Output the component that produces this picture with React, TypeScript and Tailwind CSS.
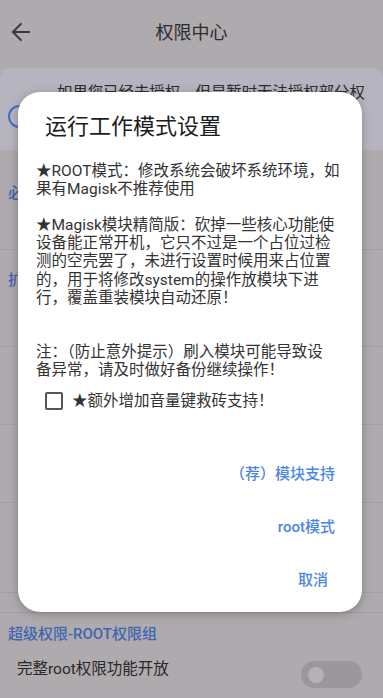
import React from "react";
import { ArrowLeft } from "lucide-react";

/* ---------- background page (dimmed by the dialog scrim) ---------- */

function Row({ children, h }: { children?: React.ReactNode; h: string }) {
  return (
    <div className={`${h} border-b border-[#a29ea3] px-2 flex items-center`}>
      {children}
    </div>
  );
}

function Toggle() {
  return (
    <div className="flex h-[27px] w-[61px] items-center rounded-full bg-[#9b989c] pl-[7px]">
      <div className="h-[16px] w-[16px] rounded-full bg-[#b5b2b6]" />
    </div>
  );
}

/* ---------- dialog ---------- */

function DialogButton({
  children,
  extra = "",
}: {
  children: React.ReactNode;
  extra?: string;
}) {
  return (
    <button
      className={`flex h-[53px] items-center text-[15px] font-medium text-[#4a86e2] ${extra}`}
    >
      {children}
    </button>
  );
}

export default function App() {
  return (
    <div className="relative h-[698px] w-full overflow-hidden bg-[#aeaaae] font-['Roboto','Noto_Sans_CJK_SC',sans-serif]">
      {/* header */}
      <div className="flex h-[64px] items-center">
        <div className="flex w-[48px] pl-[7px]">
          <ArrowLeft size={28} strokeWidth={1.7} className="text-[#3a383c]" />
        </div>
        <div className="flex-1 text-center text-[18px] text-[#2e2c30]">
          权限中心
        </div>
        <div className="w-[48px]" />
      </div>

      {/* info card */}
      <div className="mt-[4px] flex h-[82px] rounded-t-[10px] bg-[#b6b4be]">
        <div className="flex w-[57px] items-center pl-[8px] pt-[14px]">
          <div className="h-[23px] w-[23px] rounded-full border-[2.5px] border-[#3f6fcf]" />
        </div>
        <div className="whitespace-nowrap pt-[10px] text-[15.4px] leading-[30px] text-[#2e2c30]">
          如果您已经去授权，但是暂时无法授权部分权
          <br />
          限，请前往系统设置中手动开启相关应用权
        </div>
      </div>

      {/* list behind the dialog */}
      <Row h="h-[100px]">
        <span className="-mt-[12px] text-[15px] font-medium text-[#4066b0]">
          必要权限
        </span>
      </Row>
      <Row h="h-[97px]">
        <span className="-mt-[36px] text-[15px] font-medium text-[#4066b0]">
          扩展权限
        </span>
      </Row>
      <Row h="h-[78px]" />
      <Row h="h-[78px]" />
      <Row h="h-[90px]" />
      <Row h="h-[20px]" />

      {/* root section */}
      <div className="px-2 pt-[11px] text-[15px] font-medium leading-[20px] text-[#4066b0]">
        超级权限-ROOT权限组
      </div>
      <div className="mt-[7px] flex items-center justify-between pl-[17px] pr-[21px]">
        <span className="text-[15.5px] text-[#2a282b]">完整root权限功能开放</span>
        <div className="mt-[10px]">
          <Toggle />
        </div>
      </div>

      {/* dialog */}
      <div className="absolute left-[18px] top-[92px] flex h-[520px] w-[344px] flex-col rounded-[22px] bg-white shadow-[0_2px_10px_rgba(0,0,0,0.25)]">
        <div className="pl-[27px] pt-[21px] text-[22px] leading-[28px] text-[#1c1c1c]">
          运行工作模式设置
        </div>

        <div className="mt-[21px] whitespace-nowrap px-[18px] text-[15.5px] leading-[18.1px] text-[#333333]">
          ★ROOT模式：修改系统会破坏系统环境，如
          <br />
          果有Magisk不推荐使用
          <br />
          <br />
          ★Magisk模块精简版：砍掉一些核心功能使
          <br />
          设备能正常开机，它只不过是一个占位过检
          <br />
          测的空壳罢了，未进行设置时候用来占位置
          <br />
          的，用于将修改system的操作放模块下进
          <br />
          行，覆盖重装模块自动还原！
          <br />
          <br />
          <br />
          注：（防止意外提示）刷入模块可能导致设
          <br />
          备异常，请及时做好备份继续操作！
        </div>

        <label className="ml-[27px] mt-[13px] flex h-[18px] items-center">
          <span className="h-[18px] w-[18px] rounded-[2px] border-2 border-[#555555]" />
          <span className="ml-[9px] text-[15.5px] text-[#333333]">
            ★额外增加音量键救砖支持！
          </span>
        </label>

        <div className="mt-[38px] flex flex-col items-end pr-[27px]">
          <DialogButton>（荐）模块支持</DialogButton>
          <DialogButton>root模式</DialogButton>
          <DialogButton extra="mr-[7px]">取消</DialogButton>
        </div>
      </div>
    </div>
  );
}
